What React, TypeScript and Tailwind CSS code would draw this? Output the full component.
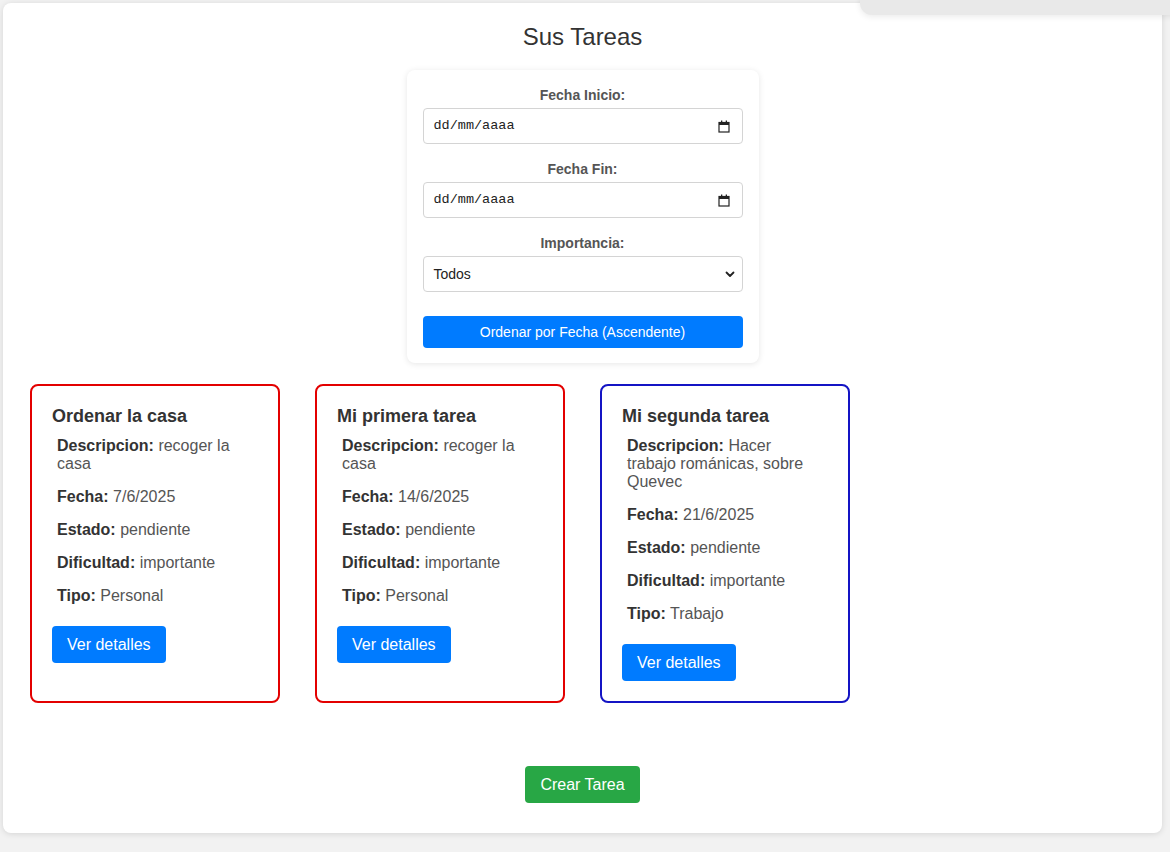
import React from 'react'

type Task = {
  title: string
  description: string
  date: string
  state: string
  difficulty: string
  type: string
  border: string
}

const tasks: Task[] = [
  {
    title: 'Ordenar la casa',
    description: 'recoger la casa',
    date: '7/6/2025',
    state: 'pendiente',
    difficulty: 'importante',
    type: 'Personal',
    border: 'border-[#e30000]',
  },
  {
    title: 'Mi primera tarea',
    description: 'recoger la casa',
    date: '14/6/2025',
    state: 'pendiente',
    difficulty: 'importante',
    type: 'Personal',
    border: 'border-[#e30000]',
  },
  {
    title: 'Mi segunda tarea',
    description: 'Hacer trabajo románicas, sobre Quevec',
    date: '21/6/2025',
    state: 'pendiente',
    difficulty: 'importante',
    type: 'Trabajo',
    border: 'border-[#1414c4]',
  },
]

const CalendarIcon = () => (
  <svg width="12" height="13" viewBox="0 0 12 13" fill="none">
    <rect x="1" y="2.5" width="10" height="9.5" stroke="#222" strokeWidth="1.2" />
    <rect x="1" y="2" width="10" height="3" fill="#222" />
    <rect x="3" y="0.5" width="1.3" height="2" fill="#222" />
    <rect x="7.7" y="0.5" width="1.3" height="2" fill="#222" />
  </svg>
)

const DateField = ({ label, first }: { label: string; first?: boolean }) => (
  <div className={first ? 'flex flex-col' : 'mt-[17px] flex flex-col'}>
    <label className="mb-[5px] h-[16px] text-center text-[14px] leading-[16px] font-bold text-[#555]">
      {label}
    </label>
    <div className="flex h-[36px] items-center justify-between rounded-[4px] border border-[#d4d4d4] bg-white pr-[12px] pl-[10px]">
      <span className="font-['Liberation_Mono',monospace] text-[13.5px] text-[#222]">dd/mm/aaaa</span>
      <CalendarIcon />
    </div>
  </div>
)

const Line = ({ label, value }: { label: string; value: string }) => (
  <p className="mt-[15px] pr-[8px] pl-[5px] text-[16px] leading-[18px] text-[#555]">
    <strong className="font-bold text-[#333]">{label}</strong> {value}
  </p>
)

const TaskCard = ({ task }: { task: Task }) => (
  <div className={`flex w-[250px] flex-col rounded-lg border-2 bg-white p-[20px] ${task.border}`}>
    <h3 className="text-[18px] leading-[21px] font-bold text-[#333]">{task.title}</h3>
    <p className="mt-[10px] pr-[8px] pl-[5px] text-[16px] leading-[18px] text-[#555]">
      <strong className="font-bold text-[#333]">Descripcion:</strong> {task.description}
    </p>
    <Line label="Fecha:" value={task.date} />
    <Line label="Estado:" value={task.state} />
    <Line label="Dificultad:" value={task.difficulty} />
    <Line label="Tipo:" value={task.type} />
    <div>
      <button className="mt-[21px] h-[37px] rounded-[4px] bg-[#007bff] px-[15px] text-[16px] text-white">
        Ver detalles
      </button>
    </div>
  </div>
)

export default function App() {
  return (
    <div className="relative h-[852px] w-full overflow-hidden bg-[#f2f2f2] pt-[3px] pl-[3px] font-['Liberation_Sans',Arial,sans-serif]">
      <div className="flex h-[830px] w-[1159px] flex-col rounded-lg bg-white pt-[20px] shadow-[0_1px_6px_rgba(0,0,0,0.12)]">
        <h1 className="text-center text-[24px] leading-[28px] text-[#333]">Sus Tareas</h1>

        <div className="mx-auto mt-[19px] flex w-[352px] flex-col rounded-lg bg-white px-[16px] pt-[17px] pb-[15px] shadow-[0_1px_6px_rgba(0,0,0,0.1)]">
          <DateField label="Fecha Inicio:" first />
          <DateField label="Fecha Fin:" />
          <div className="mt-[17px] flex flex-col">
            <label className="mb-[5px] h-[16px] text-center text-[14px] leading-[16px] font-bold text-[#555]">
              Importancia:
            </label>
            <div className="flex h-[36px] items-center justify-between rounded-[4px] border border-[#d4d4d4] bg-white pr-[6px] pl-[10px]">
              <span className="text-[14px] text-[#222]">Todos</span>
              <svg width="12" height="12" viewBox="0 0 12 12" fill="none">
                <path d="M2.5 4.5 6 8l3.5-3.5" stroke="#222" strokeWidth="1.8" strokeLinecap="round" strokeLinejoin="round" />
              </svg>
            </div>
          </div>
          <button className="mt-[24px] h-[32px] rounded-[4px] bg-[#007bff] text-[14px] text-white">
            Ordenar por Fecha (Ascendente)
          </button>
        </div>

        <div className="mt-[21px] flex gap-[35px] pl-[27px]">
          {tasks.map((task) => (
            <TaskCard key={task.title} task={task} />
          ))}
        </div>

        <div className="mt-[63px] flex justify-center">
          <button className="h-[37px] rounded-[4px] bg-[#28a745] px-[15px] text-[16px] text-white">
            Crear Tarea
          </button>
        </div>
      </div>

      <div className="absolute top-[-20px] left-[860px] h-[35px] w-[330px] rounded-xl bg-[#e9e9e9] shadow-[0_2px_6px_rgba(0,0,0,0.08)]">
        <div className="absolute top-[-10px] left-[215px] h-[28px] w-[130px] rounded-xl border border-[#f4f4f4]" />
      </div>
    </div>
  )
}
